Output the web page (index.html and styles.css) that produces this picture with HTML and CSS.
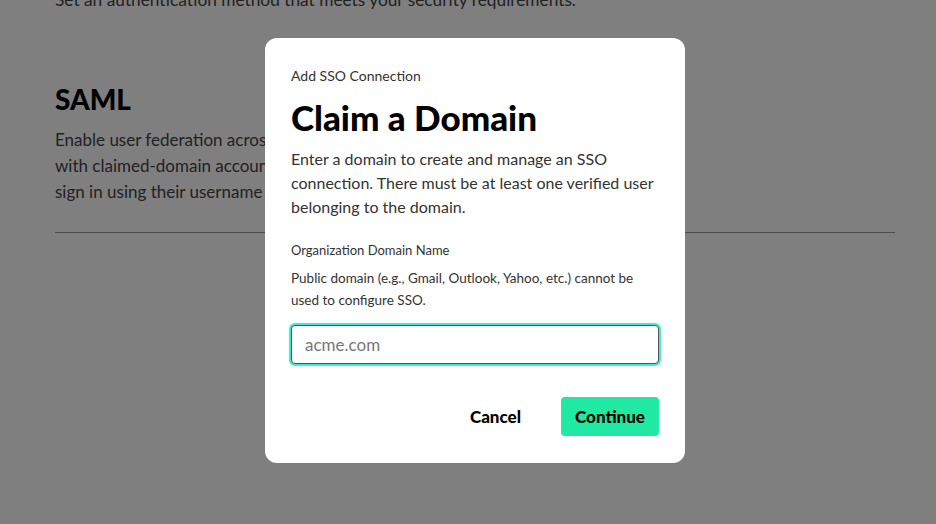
FILE: index.html
```html
<!DOCTYPE html>
<html>
<head>
<meta charset="utf-8">
<link rel="stylesheet" href="styles.css">
</head>
<body>
<div class="page">
  <p class="intro">Set an authentication method that meets your security requirements.</p>
  <section class="saml">
    <h2 class="saml-title">SAML</h2>
    <p class="saml-text">Enable user federation across your organization’s identity provider<br>with claimed-domain accounts. Users on claimed domains will<br>sign in using their username and password from the IdP.</p>
  </section>
  <hr class="divider">
</div>
<div class="overlay">
  <div class="modal">
    <div class="eyebrow">Add SSO Connection</div>
    <h1 class="title">Claim a Domain</h1>
    <p class="desc">Enter a domain to create and manage an SSO connection. There must be at least one verified user belonging to the domain.</p>
    <div class="label">Organization Domain Name</div>
    <p class="help">Public domain (e.g., Gmail, Outlook, Yahoo, etc.) cannot be used to configure SSO.</p>
    <input class="field" type="text" placeholder="acme.com">
    <div class="actions">
      <button class="btn-cancel">Cancel</button>
      <button class="btn-continue">Continue</button>
    </div>
  </div>
</div>
</body>
</html>
```

FILE: styles.css
```css
* { box-sizing: border-box; }
html, body { margin: 0; padding: 0; }
body {
  width: 936px;
  height: 524px;
  overflow: hidden;
  background: #ffffff;
  font-family: Lato, "Noto Sans", sans-serif;
  color: #333333;
  position: relative;
}
.page {
  padding: 0 41px 0 55px;
}
.intro {
  margin: -12px 0 0 0;
  font-size: 17.3px;
  line-height: 24px;
  color: #444;
}
.saml { margin-top: 71px; }
.saml-title {
  margin: 0;
  font-size: 28px;
  line-height: 32px;
  font-weight: 900;
  color: #000;
}
.saml-text {
  margin: 12px 0 0 0;
  font-size: 17px;
  line-height: 26px;
  color: #444;
}
.divider {
  margin: 27px 0 0 0;
  border: 0;
  border-top: 1px solid #999;
}
.overlay {
  position: absolute;
  inset: 0;
  background: rgba(0,0,0,0.5);
}
.modal {
  position: absolute;
  left: 265px;
  top: 38px;
  width: 420px;
  height: 425px;
  background: #fff;
  border-radius: 12px;
  padding: 28px 26px 27px 26px;
  display: flex;
  flex-direction: column;
}
.eyebrow {
  font-size: 14px;
  line-height: 20px;
  color: #333;
}
.title {
  margin: 11px 0 0 0;
  font-size: 35px;
  line-height: 40px;
  font-weight: 900;
  color: #000;
}
.desc {
  margin: 10px 0 0 0;
  font-size: 16px;
  line-height: 24px;
  color: #333;
}
.label {
  margin-top: 21px;
  font-size: 13px;
  line-height: 20px;
  color: #333;
}
.help {
  margin: 7px 0 0 0;
  font-size: 13.5px;
  line-height: 22px;
  color: #333;
}
.field {
  margin-top: 14px;
  width: 368px;
  height: 39px;
  border: 1px solid #555;
  border-radius: 4px;
  padding: 0 13px;
  font-family: inherit;
  font-size: 17px;
  color: #333;
  outline: none;
  box-shadow: 0 0 1px 2px #3de8cc;
}
.field::placeholder { color: #777; }
.actions {
  margin-top: 33px;
  display: flex;
  justify-content: flex-end;
  align-items: center;
  gap: 16px;
}
.btn-cancel, .btn-continue {
  font-family: inherit;
  font-size: 17px;
  font-weight: 900;
  color: #000;
  border: 0;
  height: 39px;
  border-radius: 4px;
  cursor: pointer;
}
.btn-cancel {
  background: transparent;
  padding: 0 24px;
}
.btn-continue {
  background: #1fe9a3;
  width: 98px;
  padding: 0;
}
```
